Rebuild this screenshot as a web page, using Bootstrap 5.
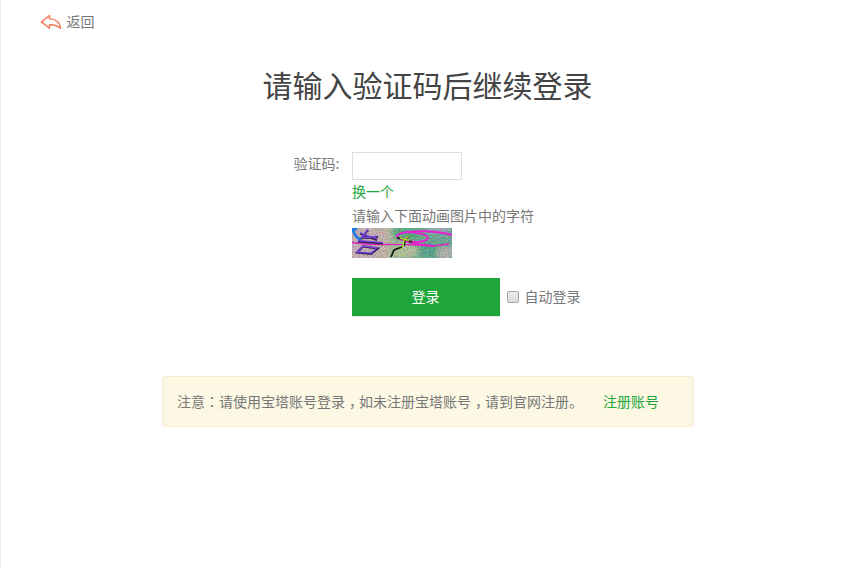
<!DOCTYPE html>
<html lang="zh-CN">
<head>
  <meta charset="UTF-8">
  <title>登录</title>
  <link href="https://cdn.jsdelivr.net/npm/bootstrap@5.3.2/dist/css/bootstrap.min.css" rel="stylesheet">
  <style>
    body {
      font: 14px/22px "Noto Sans CJK SC", sans-serif;
      color: #777;
      min-height: 100vh;
      border-left: 1px solid #f0f0f0;
    }
    a { color: #20a53a; text-decoration: none; }
    .back-link { color: #777; height: 24px; margin: 10px 0 0 39px; }
    .back-text { padding: 0 0 2px 4.5px; }
    .login-box { width: 532px; margin-left: 161px; }
    .login-title { font-size: 30px; line-height: 40px; color: #444; margin: 30px 1px 48px 0; font-weight: 400; }
    .field-label { width: 177.5px; margin-right: 12.5px; }
    .hint-line { height: 24px; }
    .code-input { width: 110px; height: 28px; border-color: #ddd; }
    .captcha { width: 100px; height: 30px; }
    .submit-row { margin-top: 20px; }
    .login-btn {
      --bs-btn-color: #fff;
      --bs-btn-bg: #20a53a;
      --bs-btn-hover-color: #fff;
      --bs-btn-hover-bg: #1b8f31;
      width: 148px;
      height: 38px;
      font-size: 14px;
      padding: 0 1px 2px 0;
      margin-right: 7px;
      box-shadow: 0 1px 0 #e4e9e5;
    }
    .auto-check {
      appearance: none;
      width: 12px;
      height: 12px;
      border: 1px solid #a5a5a5;
      border-radius: 2px;
      background: linear-gradient(#ededed, #dadada);
    }
    .auto-label { padding: 0 0 2px 5.5px; }
    .notice {
      height: 51px;
      margin-top: 60px;
      padding: 0 14px 2px;
      background: #fcf8e3;
      border: 1px solid #faebcc;
      border-radius: 4px;
    }
    .register-link { margin-left: 20px; }
    .colon { font-family: "Noto Sans CJK TC", sans-serif; }
    /* half-width comma, centred in a full-width cell */
    .comma { font-feature-settings: "halt"; padding: 0 3px 0 4px; }
  </style>
</head>
<body>
  <a href="#" class="back-link d-flex align-items-center">
    <svg width="22" height="16" viewBox="0 0 22 16" fill="none" stroke="#f57b55" stroke-width="1.4" stroke-linejoin="round">
      <path d="M1.4 7.9 9.5 1.5V4.9C15.5 4.8 20 8.3 20.4 14.4 17.5 11.4 14 10.5 9.5 10.7V14.3Z"/>
    </svg>
    <span class="back-text">返回</span>
  </a>

  <main class="login-box">
    <h1 class="login-title text-center">请输入验证码后继续登录</h1>

    <form>
      <div class="d-flex">
        <label for="code" class="field-label text-end">验证码:</label>
        <div class="d-flex flex-column align-items-start">
          <input type="text" class="form-control code-input rounded-0" id="code">
          <a href="#" class="hint-line">换一个</a>
          <span class="hint-line">请输入下面动画图片中的字符</span>
          <svg class="captcha" viewBox="0 0 100 30">
            <defs>
              <linearGradient id="tint">
                <stop offset="0" stop-color="#cfb4bf"/>
                <stop offset=".35" stop-color="#cbb9a8"/>
                <stop offset=".45" stop-color="#8fbd90"/>
                <stop offset=".65" stop-color="#62ad8b"/>
                <stop offset="1" stop-color="#5ba892"/>
              </linearGradient>
              <filter id="grain" x="0" y="0" width="100%" height="100%" color-interpolation-filters="sRGB">
                <feTurbulence type="fractalNoise" baseFrequency=".85" numOctaves="2" seed="4"/>
                <feColorMatrix values="2 0 0 0 -.4  0 2 0 0 -.4  0 0 2 0 -.4  0 0 0 0 1"/>
              </filter>
              <filter id="soft"><feGaussianBlur stdDeviation="2"/></filter>
            </defs>
            <rect width="100" height="30" fill="url(#tint)"/>
            <g filter="url(#soft)">
              <ellipse cx="57" cy="5" rx="17" ry="7" fill="#3fad78"/>
              <ellipse cx="52" cy="23" rx="14" ry="8" fill="#b5c99a"/>
              <ellipse cx="77" cy="22" rx="9" ry="8" fill="#3ea582"/>
              <ellipse cx="94" cy="25" rx="9" ry="7" fill="#b3b3ae"/>
              <ellipse cx="86" cy="1" rx="14" ry="4" fill="#98aac4"/>
            </g>
            <rect width="100" height="30" filter="url(#grain)" opacity=".28"/>
            <g fill="none">
              <path d="M0 0H5L1 2Q3 9 9 12" stroke="#197bea" stroke-width="2.6"/>
              <path d="M0 14.5Q15 17 30 16.5T65 17 82 18 97 16" stroke="#db24be" stroke-width="1.3"/>
              <path d="M100 7C88 3 55 1 45 7 44 12 59 16 82 18M54 4C65 4 76 7 76 10 75 14 62 15 56 13" stroke="#e91fd4" stroke-width="1.9"/>
              <path d="M16 2 9 11M8 5.5 25 12M11 10 26 9M6 13.5 31 15.5M11 18.5 26 20.5 19 26 5 24.5Z" stroke="#2a1c4d" stroke-width="2"/>
              <path d="M16 1.5 9 10M8 5 25 11M11 9.5 25 8.5M6 12.5 31 14.7M11 18 25 19.8 19 25.2 5 24Z" stroke="#7d43e6" stroke-width="1.3"/>
              <path d="M45 10 53 11 60 14.5M57 8 53 12 52 18" stroke="#222b17" stroke-width="1.8"/>
              <path d="M48 10 57 12.5M57 8 52 12 51 18 48 21" stroke="#b6d63c" stroke-width="1.4"/>
              <path d="M50 19 42 22 39 29" stroke="#11190d" stroke-width="1.7"/>
            </g>
          </svg>
          <div class="submit-row d-flex align-items-center">
            <button type="button" class="btn login-btn rounded-0 border-0">登录</button>
            <input type="checkbox" class="auto-check m-0" id="auto">
            <label for="auto" class="auto-label">自动登录</label>
          </div>
        </div>
      </div>
    </form>

    <div class="notice d-flex align-items-center">
      <span>注意<span class="colon" lang="zh-TW">：</span>请使用宝塔账号登录<span class="comma">，</span>如未注册宝塔账号<span class="comma">，</span>请到官网注册。</span>
      <a href="#" class="register-link">注册账号</a>
    </div>
  </main>

  <script src="https://cdn.jsdelivr.net/npm/bootstrap@5.3.2/dist/js/bootstrap.bundle.min.js"></script>
</body>
</html>
